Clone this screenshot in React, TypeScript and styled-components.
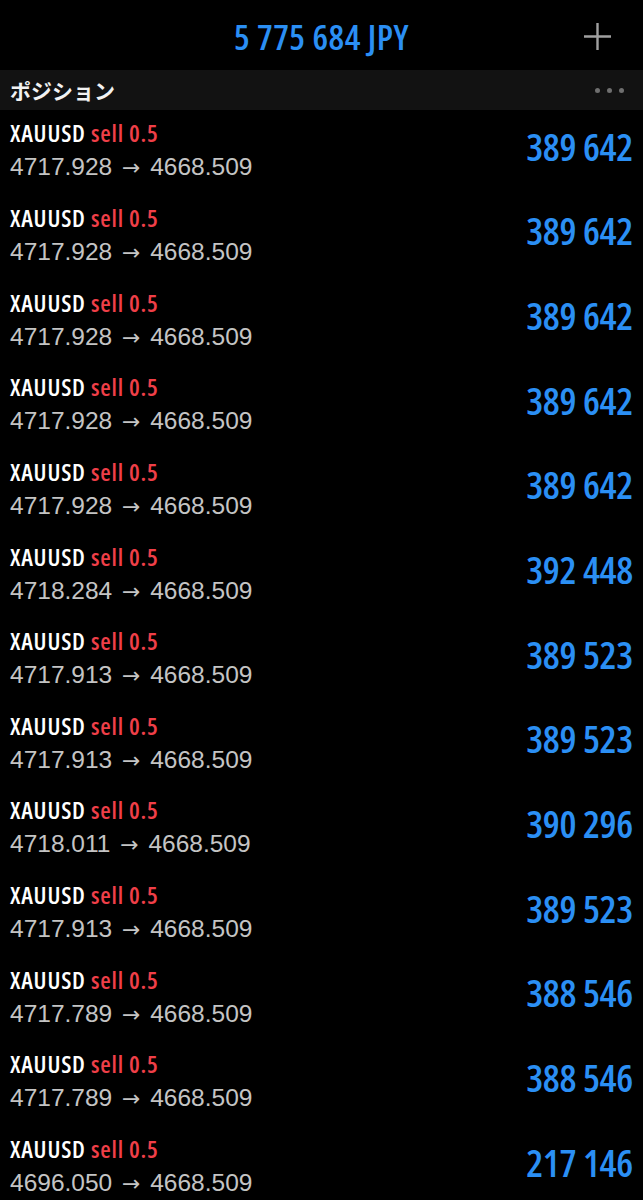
import React from 'react';
import styled, { createGlobalStyle } from 'styled-components';

const Blue = '#2b8ff4';
const Red = '#ef3f48';
const Condensed = '"Open Sans", "Noto Sans", sans-serif';

const Global = createGlobalStyle`
  html, body { margin: 0; background: #000; }
  body { color: #fff; }
`;

const Page = styled.div`
  width: 643px;
  min-height: 1200px;
  background: #000;
  overflow: hidden;
`;

const Header = styled.header`
  display: grid;
  grid-template-columns: 1fr auto 1fr;
  align-items: center;
  height: 70px;
  padding-top: 2px;
  box-sizing: border-box;
`;

const Title = styled.h1`
  grid-column: 2;
  margin: 0;
  font-family: ${Condensed};
  font-stretch: 75%;
  font-weight: 600;
  font-size: 35px;
  letter-spacing: 0.5px;
  line-height: 1;
  color: ${Blue};
`;

const PlusButton = styled.button`
  justify-self: end;
  display: flex;
  margin-right: 32px;
  padding: 0;
  border: 0;
  background: none;
`;

const SectionBar = styled.div`
  display: flex;
  align-items: center;
  justify-content: space-between;
  height: 40px;
  padding: 0 19px 0 10px;
  background: #121212;
`;

const SectionTitle = styled.h2`
  margin: 0;
  font-family: "Noto Sans CJK JP", sans-serif;
  font-weight: 700;
  font-size: 21px;
  color: #f2f2f2;
`;

const Dots = styled.div`
  display: flex;
  gap: 7px;
`;

const Dot = styled.span`
  width: 5px;
  height: 5px;
  border-radius: 50%;
  background: #6f6f6f;
`;

const List = styled.ul`
  margin: 0;
  padding: 0;
  list-style: none;
`;

const Row = styled.li`
  display: flex;
  align-items: center;
  justify-content: space-between;
  height: 84.65px;
  padding: 0 10px;
  box-sizing: border-box;
`;

const Info = styled.div`
  display: flex;
  flex-direction: column;
  margin-bottom: 3px;
`;

const Symbol = styled.div`
  font-family: ${Condensed};
  font-stretch: 75%;
  font-weight: 600;
  font-size: 24px;
  letter-spacing: 0.8px;
  line-height: 34px;
  color: #fff;
`;

const Side = styled.span`
  color: ${Red};
`;

const Prices = styled.div`
  font-family: "Liberation Sans", Arial, sans-serif;
  font-size: 24.5px;
  line-height: 34px;
  color: #c4c4c4;
`;

const Arrow = styled.span`
  margin: 0 3px;
  font-family: "DejaVu Sans", sans-serif;
  font-size: 22px;
`;

const Profit = styled.div`
  margin-bottom: 13px;
  font-family: ${Condensed};
  font-stretch: 75%;
  font-weight: 600;
  font-size: 38px;
  letter-spacing: -0.3px;
  line-height: 1;
  color: ${Blue};
`;

const positions = [
  ['4717.928', '389 642'],
  ['4717.928', '389 642'],
  ['4717.928', '389 642'],
  ['4717.928', '389 642'],
  ['4717.928', '389 642'],
  ['4718.284', '392 448'],
  ['4717.913', '389 523'],
  ['4717.913', '389 523'],
  ['4718.011', '390 296'],
  ['4717.913', '389 523'],
  ['4717.789', '388 546'],
  ['4717.789', '388 546'],
  ['4696.050', '217 146'],
];

export default function App() {
  return (
    <Page>
      <Global />
      <Header>
        <Title>5 775 684 JPY</Title>
        <PlusButton aria-label="add">
          <svg width="27" height="27" viewBox="0 0 27 27">
            <path d="M13.5 0v27M0 13.5h27" stroke="#a0a0a0" strokeWidth="2.4" />
          </svg>
        </PlusButton>
      </Header>
      <SectionBar>
        <SectionTitle>ポジション</SectionTitle>
        <Dots>
          <Dot />
          <Dot />
          <Dot />
        </Dots>
      </SectionBar>
      <List>
        {positions.map(([open, profit], i) => (
          <Row key={i}>
            <Info>
              <Symbol>
                XAUUSD <Side>sell 0.5</Side>
              </Symbol>
              <Prices>
                {open} <Arrow>→</Arrow> 4668.509
              </Prices>
            </Info>
            <Profit>{profit}</Profit>
          </Row>
        ))}
      </List>
    </Page>
  );
}
